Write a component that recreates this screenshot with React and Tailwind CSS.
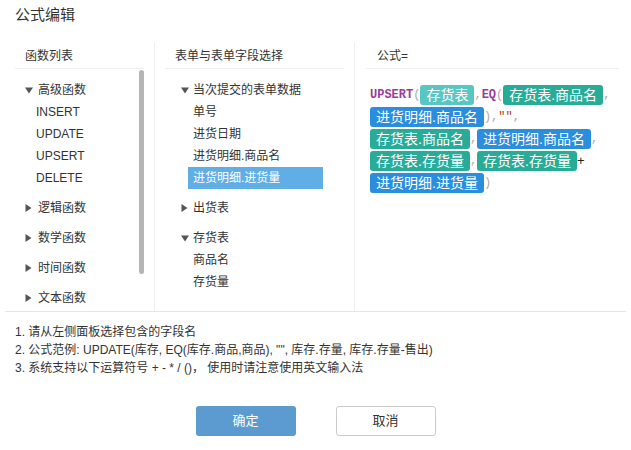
import React from "react";

const Down = () => (
  <svg width="8" height="7" viewBox="0 0 8 7" className="shrink-0">
    <path d="M0 0.5 L8 0.5 L4 6.5 Z" fill="#555" />
  </svg>
);
const Right = () => (
  <svg width="7" height="8" viewBox="0 0 7 8" className="shrink-0">
    <path d="M0.5 0 L6.5 4 L0.5 8 Z" fill="#555" />
  </svg>
);

function Tag({ children, kind }) {
  const bg =
    kind === "light" ? "bg-[#58c6c2]" : kind === "blue" ? "bg-[#2b8ddd]" : "bg-[#28ac98]";
  return (
    <span className={`${bg} text-white text-[14px] h-[20px] leading-[20px] px-[6px] rounded-[3px] whitespace-nowrap`}>
      {children}
    </span>
  );
}

const P = ({ children }) => (
  <span className="text-[#aaa] font-['Liberation_Mono','DejaVu_Sans_Mono',monospace] text-[12px]">{children}</span>
);
const K = ({ children }) => (
  <span className="text-[#9c3a9c] font-bold font-['Liberation_Mono','DejaVu_Sans_Mono',monospace] text-[12px]">{children}</span>
);
const S = ({ children }) => (
  <span className="text-[#c0392b] font-['Liberation_Mono','DejaVu_Sans_Mono',monospace] text-[12px]">{children}</span>
);

export default function App() {
  return (
    <div className="w-[631px] h-[450px] bg-white text-[#333] font-['Liberation_Sans','Noto_Sans_CJK_SC',sans-serif] overflow-hidden">
      <div className="h-[31px] flex items-center pl-[15px] text-[15px]">公式编辑</div>

      <div className="mt-[11px] mx-[5px] h-[270px] flex border-b border-[#e6e6e6] text-[12px]">
        {/* Column 1 */}
        <div className="w-[150px] shrink-0 border-r border-[#eee] px-[10px] flex flex-col">
          <div className="h-[27px] shrink-0 flex items-center pl-[10px] pt-[1px] border-b border-[#eee]">函数列表</div>
          <div className="flex flex-1 overflow-hidden">
            <div className="flex-1 pt-[10px]">
              <div className="h-[22px] flex items-center pl-[10px] gap-[5px]"><Down /><span>高级函数</span></div>
              {["INSERT", "UPDATE", "UPSERT", "DELETE"].map((t) => (
                <div key={t} className="h-[22px] flex items-center pl-[21px]">{t}</div>
              ))}
              {["逻辑函数", "数学函数", "时间函数", "文本函数"].map((t) => (
                <div key={t} className="mt-[8px] h-[22px] flex items-center pl-[10px] gap-[6px]"><Right /><span>{t}</span></div>
              ))}
            </div>
            <div className="w-[5px] pt-[1px]">
              <div className="h-[204px] bg-[#b5b5b5] rounded-full" />
            </div>
          </div>
        </div>

        {/* Column 2 */}
        <div className="w-[200px] shrink-0 border-r border-[#eee] px-[10px] flex flex-col">
          <div className="h-[27px] shrink-0 flex items-center pl-[10px] pt-[1px] border-b border-[#eee]">表单与表单字段选择</div>
          <div className="pt-[10px]">
            <div className="h-[22px] flex items-center pl-[16px] gap-[4px]"><Down /><span>当次提交的表单数据</span></div>
            {["单号", "进货日期", "进货明细.商品名"].map((t) => (
              <div key={t} className="h-[22px] flex items-center ml-[23px] pl-[5px]">{t}</div>
            ))}
            <div className="h-[22px] flex items-center ml-[23px] pl-[5px] w-[135px] bg-[#5faee5] text-white">进货明细.进货量</div>
            <div className="mt-[8px] h-[22px] flex items-center pl-[16px] gap-[5px]"><Right /><span>出货表</span></div>
            <div className="mt-[8px] h-[22px] flex items-center pl-[16px] gap-[4px]"><Down /><span>存货表</span></div>
            {["商品名", "存货量"].map((t) => (
              <div key={t} className="h-[22px] flex items-center ml-[23px] pl-[5px]">{t}</div>
            ))}
          </div>
        </div>

        {/* Column 3 */}
        <div className="flex-1 pl-[11px] pr-[7px] flex flex-col">
          <div className="h-[27px] shrink-0 flex items-center pl-[11px] pt-[1px] border-b border-[#eee]">公式=</div>
          <div className="pt-[15px] pl-[4px] flex flex-col">
            <div className="h-[22px] flex items-center">
              <K>UPSERT</K><P>(</P><Tag kind="light">存货表</Tag><P>,</P><K>EQ</K><P>(</P><Tag>存货表.商品名</Tag><P>,</P>
            </div>
            <div className="h-[22px] flex items-center">
              <Tag kind="blue">进货明细.商品名</Tag><P>)</P><P>,</P><S>""</S><P>,</P>
            </div>
            <div className="h-[22px] flex items-center">
              <Tag>存货表.商品名</Tag><P>,</P><Tag kind="blue">进货明细.商品名</Tag><P>,</P>
            </div>
            <div className="h-[22px] flex items-center">
              <Tag>存货表.存货量</Tag><P>,</P><Tag>存货表.存货量</Tag><span className="text-[#222] text-[13px]">+</span>
            </div>
            <div className="h-[22px] flex items-center">
              <Tag kind="blue">进货明细.进货量</Tag><P>)</P>
            </div>
          </div>
        </div>
      </div>

      <div className="mt-[11px] pl-[15px] text-[12px] leading-[18px] text-[#333]">
        <div>1. 请从左侧面板选择包含的字段名</div>
        <div>2. 公式范例: UPDATE(库存, EQ(库存.商品,商品), "", 库存.存量, 库存.存量-售出)</div>
        <div>3. 系统支持以下运算符号 + - * / ()， 使用时请注意使用英文输入法</div>
      </div>

      <div className="mt-[29px] flex justify-center gap-[40px] text-[13px]">
        <button className="w-[100px] h-[30px] rounded-[3px] bg-[#5b9bd0] text-white">确定</button>
        <button className="w-[100px] h-[30px] rounded-[3px] bg-white border border-[#ccc] text-[#333]">取消</button>
      </div>
    </div>
  );
}
